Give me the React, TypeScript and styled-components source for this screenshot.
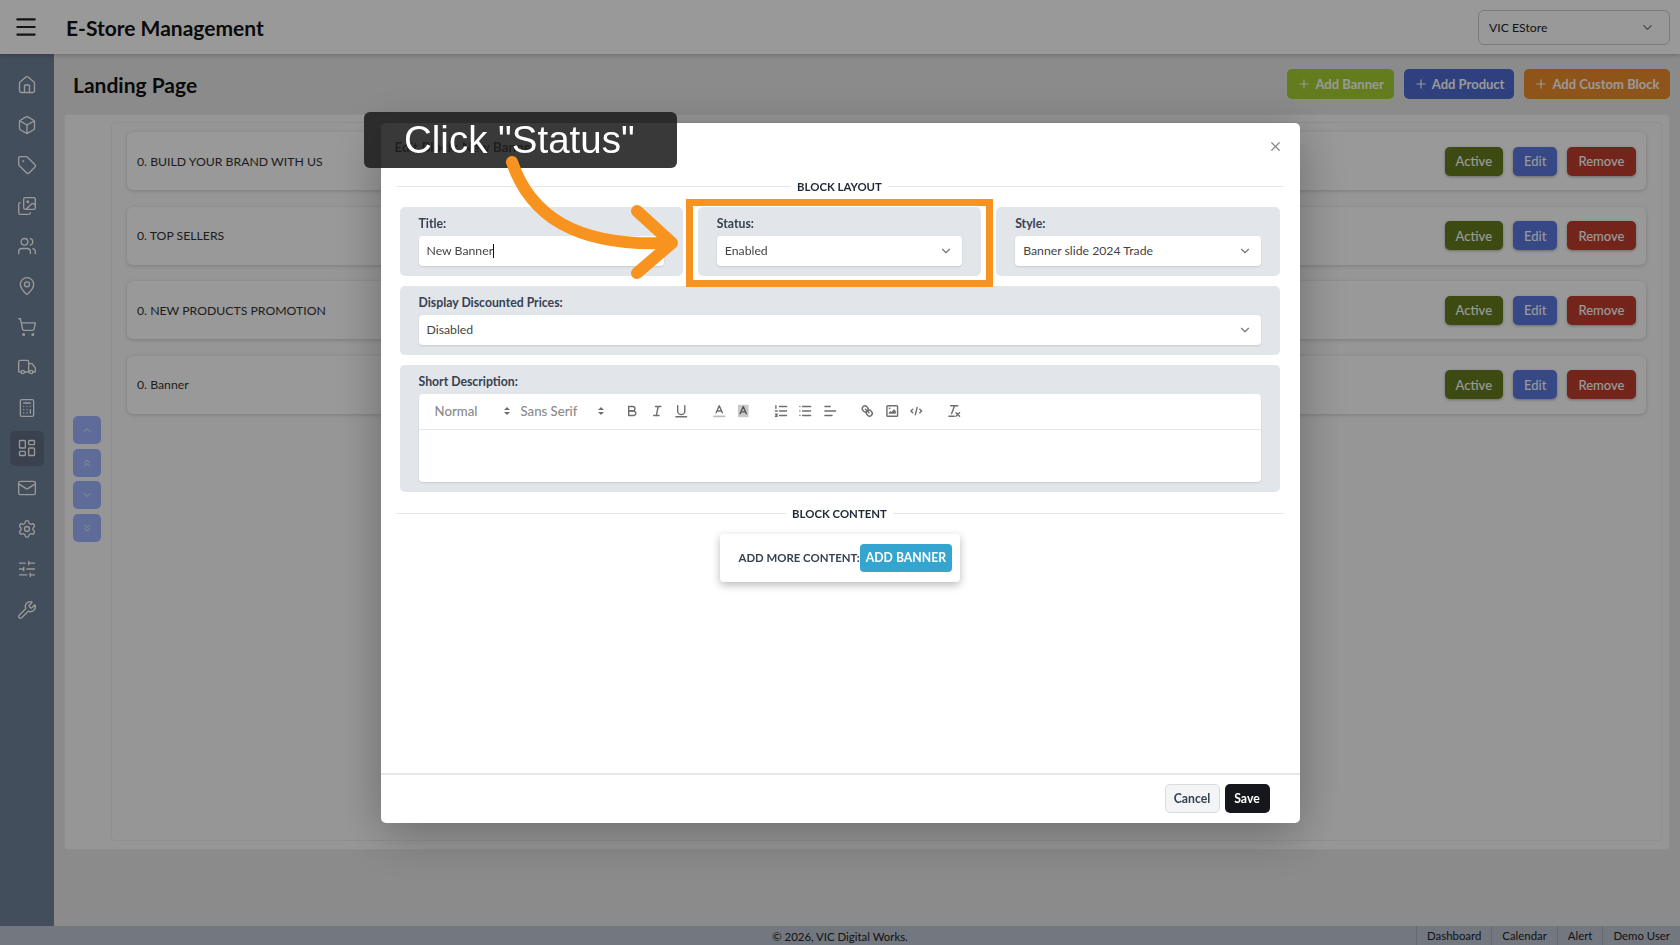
import styled, { createGlobalStyle } from 'styled-components';
import {
  Box,
  Calculator,
  ChevronDown,
  ChevronsDown,
  ChevronsUp,
  ChevronUp,
  House,
  Images,
  LayoutDashboard,
  Mail,
  MapPin,
  Menu,
  Plus,
  Settings,
  ShoppingCart,
  SlidersHorizontal,
  Tag,
  Truck,
  Users,
  Wrench,
  X,
} from 'lucide-react';

const GlobalStyle = createGlobalStyle`
  html, body {
    margin: 0;
    height: 100%;
    overflow: hidden;
    background: #e8e8e8;
    font-family: Lato, "Open Sans", sans-serif;
  }
  * { box-sizing: border-box; }
`;

const Shell = styled.div`
  height: 945px;
  display: flex;
  flex-direction: column;
`;

const TopBar = styled.header`
  height: 54px;
  flex: none;
  display: flex;
  align-items: center;
  padding: 0 10px 0 13px;
  background: #fff;
  box-shadow: 0 1px 5px rgba(0, 0, 0, 0.25);
  position: relative;
  color: #111;
`;

const AppTitle = styled.h1`
  margin: 0 auto 0 27px;
  font-size: 21px;
  font-weight: 700;
`;

const StoreSelect = styled.div`
  width: 192px;
  height: 35px;
  display: flex;
  align-items: center;
  justify-content: space-between;
  padding: 0 14px 0 10px;
  border: 1px solid #ccc;
  border-radius: 6px;
  font-size: 12.25px;
  color: #222;
`;

const Body = styled.div`
  flex: 1;
  display: flex;
  min-height: 0;
`;

const Sidebar = styled.nav`
  width: 53.5px;
  flex: none;
  display: flex;
  flex-direction: column;
  align-items: center;
  padding-top: 13px;
  background: #708299;
  color: #fff;
`;

const SideItem = styled.div<{ $active?: boolean }>`
  width: 34px;
  height: 35px;
  margin-bottom: 5.4px;
  display: flex;
  align-items: center;
  justify-content: center;
  border-radius: 5px;
  background: ${p => (p.$active ? '#616e85' : 'transparent')};
`;

const Main = styled.main`
  flex: 1;
  display: flex;
  flex-direction: column;
  padding: 0 10.5px;
  min-width: 0;
`;

const PageHead = styled.div`
  height: 60px;
  flex: none;
  display: flex;
  align-items: flex-start;
  justify-content: space-between;
  padding: 15px 0 0 9px;
`;

const PageTitle = styled.h2`
  margin: 3px 0 0;
  font-size: 21px;
  font-weight: 700;
  color: #111;
`;

const HeadActions = styled.div`
  display: flex;
  gap: 10px;
`;

const AddButton = styled.button<{ $bg: string }>`
  height: 30px;
  padding: 0 10px;
  display: flex;
  align-items: center;
  gap: 4px;
  border: 0;
  border-radius: 5px;
  background: ${p => p.$bg};
  color: #fff;
  font: 700 13px Lato, sans-serif;
`;

const Panel = styled.section`
  height: 736px;
  display: flex;
  background: #fbfbfb;
  border: 1px solid #eee;
  border-radius: 4px;
`;

const MoveColumn = styled.div`
  width: 46px;
  flex: none;
  display: flex;
  flex-direction: column;
  align-items: center;
  justify-content: center;
  gap: 4.5px;
  padding: 0 2px 6px 0;
`;

const MoveButton = styled.div`
  width: 28px;
  height: 28px;
  display: flex;
  align-items: center;
  justify-content: center;
  border-radius: 5px;
  background: #9eb4ff;
  color: #eef1ff;
`;

const BlockList = styled.div`
  flex: 1;
  margin: 7px 7px 8px 0;
  padding: 9px 15px;
  display: flex;
  flex-direction: column;
  gap: 16.5px;
  border: 1px solid #eee;
  border-radius: 4px;
`;

const BlockRow = styled.div`
  height: 58px;
  flex: none;
  display: flex;
  align-items: center;
  padding: 0 10px;
  background: #fff;
  border-radius: 6px;
  box-shadow: 0 1px 4px rgba(0, 0, 0, 0.18);
  font-size: 12.25px;
  color: #333;
`;

const RowName = styled.span`
  margin-right: auto;
`;

const RowButton = styled.button<{ $bg: string }>`
  height: 29px;
  margin-left: 10px;
  padding: 0 11px;
  border: 0;
  border-radius: 5px;
  background: ${p => p.$bg};
  color: #fff;
  font: 500 13px Lato, sans-serif;
  box-shadow: 0 1px 3px rgba(0, 0, 0, 0.3);
`;

const Footer = styled.footer`
  height: 19px;
  flex: none;
  position: relative;
  display: flex;
  justify-content: flex-end;
  align-items: center;
  background: #c0c6d5;
  font-size: 11.4px;
  color: #222;
`;

const Copyright = styled.span`
  position: absolute;
  left: 0;
  right: 0;
  top: 4px;
  text-align: center;
`;

const FooterLink = styled.span`
  height: 100%;
  display: flex;
  align-items: center;
  padding: 0 10px;
  border-left: 1px solid #a9afbe;
  &:first-of-type { border-left: 0; }
`;

const Backdrop = styled.div`
  position: fixed;
  inset: 0;
  display: flex;
  justify-content: center;
  padding-top: 122.5px;
  background: rgba(0, 0, 0, 0.4);
`;

const Modal = styled.div`
  width: 919px;
  height: 700px;
  display: flex;
  flex-direction: column;
  background: #fff;
  border-radius: 5px;
  box-shadow: 0 10px 50px rgba(0, 0, 0, 0.3);
`;

const ModalHead = styled.div`
  height: 48px;
  flex: none;
  display: flex;
  align-items: center;
  justify-content: space-between;
  padding: 0 17px 0 14px;
  font-size: 13.5px;
  font-weight: 700;
  color: #222;
`;

const ModalBody = styled.div`
  flex: 1;
  padding: 9px 20px 0 19px;
  display: flex;
  flex-direction: column;
  min-height: 0;
`;

const SectionRule = styled.div`
  display: flex;
  align-items: center;
  gap: 6px;
  margin: 0 -4px;
  font-size: 11.4px;
  font-weight: 700;
  color: #1f2937;
  &::before, &::after {
    content: '';
    flex: 1;
    height: 1px;
    background: #e5e7eb;
  }
`;

const FieldRow = styled.div`
  display: grid;
  grid-template-columns: repeat(3, 1fr);
  gap: 15px;
  margin-top: 14px;
`;

const FieldBlock = styled.div<{ $wide?: boolean }>`
  margin-top: ${p => (p.$wide ? '10px' : '0')};
  padding: 9px 19px 10px;
  background: #e2e5ea;
  border-radius: 5px;
`;

const FieldLabel = styled.div`
  margin-bottom: 4px;
  font-size: 12.25px;
  font-weight: 700;
  line-height: 16px;
  color: #374151;
`;

const FieldBox = styled.div`
  height: 30px;
  display: flex;
  align-items: center;
  justify-content: space-between;
  padding: 0 9px 0 8px;
  background: #fff;
  border-radius: 4px;
  box-shadow: 0 1px 2px rgba(0, 0, 0, 0.12);
  font-size: 12.25px;
  color: #444;
`;

const Caret = styled.span`
  width: 1px;
  height: 14px;
  background: #111;
  display: inline-block;
  vertical-align: -3px;
`;

const Editor = styled.div`
  height: 88px;
  background: #fff;
  border-radius: 4px;
  box-shadow: 0 1px 2px rgba(0, 0, 0, 0.12);
`;

const Toolbar = styled.div`
  height: 36px;
  display: flex;
  align-items: center;
  padding-left: 8px;
  border-bottom: 1px solid #e5e7eb;
`;

const Picker = styled.div<{ $w: number }>`
  width: ${p => p.$w}px;
  flex: none;
  display: flex;
  align-items: center;
  justify-content: space-between;
  padding: 0 2px 0 8px;
  font-size: 13.2px;
  font-weight: 500;
  color: #8a8a8a;
`;

const ToolGroup = styled.div`
  display: flex;
  margin-left: 13px;
`;

const ToolIcon = styled.svg`
  width: 24.5px;
  height: 16px;
  fill: none;
  stroke: #6e6e6e;
  stroke-width: 1.6;
  stroke-linecap: round;
  stroke-linejoin: round;
`;

const SecondRule = styled(SectionRule)`
  margin-top: 15px;
`;

const AddCard = styled.div`
  align-self: center;
  width: 240px;
  height: 48px;
  margin-top: 14px;
  display: flex;
  align-items: center;
  justify-content: space-between;
  padding: 0 19px;
  background: #fff;
  border-radius: 4px;
  box-shadow: 0 3px 8px rgba(0, 0, 0, 0.28);
  font-size: 11.4px;
  font-weight: 700;
  color: #374151;
  white-space: nowrap;
`;

const AddBannerButton = styled.button`
  width: 93px;
  height: 28px;
  border: 0;
  border-radius: 4px;
  background: #34a5ce;
  color: #fff;
  font: 700 12.25px Lato, sans-serif;
`;

const ModalFoot = styled.div`
  height: 50px;
  flex: none;
  display: flex;
  align-items: center;
  justify-content: flex-end;
  gap: 5px;
  padding-right: 30px;
  border-top: 2px solid #e5e7eb;
`;

const FootButton = styled.button<{ $dark?: boolean }>`
  height: 29px;
  width: ${p => (p.$dark ? 45 : 55)}px;
  padding: 0;
  border: ${p => (p.$dark ? '0' : '1px solid #d8dbe0')};
  border-radius: 5px;
  background: ${p => (p.$dark ? '#15171c' : '#f3f4f6')};
  color: ${p => (p.$dark ? '#fff' : '#374151')};
  font: 700 12.25px Lato, sans-serif;
`;

const Highlight = styled.div`
  position: fixed;
  left: 686px;
  top: 199px;
  width: 307px;
  height: 88px;
  border: 7px solid #f7931e;
`;

const Callout = styled.div`
  position: fixed;
  left: 364px;
  top: 112px;
  width: 313px;
  height: 56px;
  display: flex;
  align-items: center;
  padding-left: 40px;
  background: rgba(30, 30, 30, 0.88);
  border-radius: 6px;
  font: 38.5px "Liberation Sans", Arial, sans-serif;
  color: #fff;
`;

const ArrowDrawing = styled.svg`
  position: fixed;
  left: 0;
  top: 0;
  width: 1680px;
  height: 945px;
  pointer-events: none;
`;

const sideIcons = [
  House,
  Box,
  Tag,
  Images,
  Users,
  MapPin,
  ShoppingCart,
  Truck,
  Calculator,
  LayoutDashboard,
  Mail,
  Settings,
  SlidersHorizontal,
  Wrench,
];

const blocks = [
  '0. BUILD YOUR BRAND WITH US',
  '0. TOP SELLERS',
  '0. NEW PRODUCTS PROMOTION',
  '0. Banner',
];

const PickerArrows = () => (
  <svg width="8" height="12" viewBox="0 0 8 12">
    <polygon points="1,5 4,2 7,5" fill="#6e6e6e" />
    <polygon points="1,7 4,10 7,7" fill="#6e6e6e" />
  </svg>
);

const App = () => {
  return (
    <>
      <GlobalStyle />
      <Shell>
        <TopBar>
          <Menu size={26} strokeWidth={2} color="#222" />
          <AppTitle>E-Store Management</AppTitle>
          <StoreSelect>
            VIC EStore
            <ChevronDown size={15} color="#777" />
          </StoreSelect>
        </TopBar>
        <Body>
          <Sidebar>
            {sideIcons.map((Icon, i) => (
              <SideItem key={i} $active={i === 9}>
                <Icon size={20} strokeWidth={1.6} />
              </SideItem>
            ))}
          </Sidebar>
          <Main>
            <PageHead>
              <PageTitle>Landing Page</PageTitle>
              <HeadActions>
                <AddButton $bg="#a6d033">
                  <Plus size={14} /> Add Banner
                </AddButton>
                <AddButton $bg="#4d6cd0">
                  <Plus size={14} /> Add Product
                </AddButton>
                <AddButton $bg="#ee8c2c">
                  <Plus size={14} /> Add Custom Block
                </AddButton>
              </HeadActions>
            </PageHead>
            <Panel>
              <MoveColumn>
                <MoveButton><ChevronUp size={12} /></MoveButton>
                <MoveButton><ChevronsUp size={12} /></MoveButton>
                <MoveButton><ChevronDown size={12} /></MoveButton>
                <MoveButton><ChevronsDown size={12} /></MoveButton>
              </MoveColumn>
              <BlockList>
                {blocks.map(name => (
                  <BlockRow key={name}>
                    <RowName>{name}</RowName>
                    <RowButton $bg="#677d21">Active</RowButton>
                    <RowButton $bg="#5a78e0">Edit</RowButton>
                    <RowButton $bg="#c03f2f">Remove</RowButton>
                  </BlockRow>
                ))}
              </BlockList>
            </Panel>
          </Main>
        </Body>
        <Footer>
          <Copyright>© 2026, VIC Digital Works.</Copyright>
          <FooterLink>Dashboard</FooterLink>
          <FooterLink>Calendar</FooterLink>
          <FooterLink>Alert</FooterLink>
          <FooterLink>Demo User</FooterLink>
        </Footer>
      </Shell>

      <Backdrop>
        <Modal>
          <ModalHead>
            Edit Block: New Banner
            <X size={15} color="#888" />
          </ModalHead>
          <ModalBody>
            <SectionRule>BLOCK LAYOUT</SectionRule>
            <FieldRow>
              <FieldBlock>
                <FieldLabel>Title:</FieldLabel>
                <FieldBox>
                  <span>New Banner<Caret /></span>
                </FieldBox>
              </FieldBlock>
              <FieldBlock>
                <FieldLabel>Status:</FieldLabel>
                <FieldBox>
                  Enabled
                  <ChevronDown size={14} color="#777" />
                </FieldBox>
              </FieldBlock>
              <FieldBlock>
                <FieldLabel>Style:</FieldLabel>
                <FieldBox>
                  Banner slide 2024 Trade
                  <ChevronDown size={14} color="#777" />
                </FieldBox>
              </FieldBlock>
            </FieldRow>
            <FieldBlock $wide>
              <FieldLabel>Display Discounted Prices:</FieldLabel>
              <FieldBox>
                Disabled
                <ChevronDown size={14} color="#777" />
              </FieldBox>
            </FieldBlock>
            <FieldBlock $wide>
              <FieldLabel>Short Description:</FieldLabel>
              <Editor>
                <Toolbar>
                  <Picker $w={86}>Normal <PickerArrows /></Picker>
                  <Picker $w={94.5}>Sans Serif <PickerArrows /></Picker>
                  <ToolGroup>
                    <ToolIcon viewBox="0 0 18 18">
                      <path d="M5,4H9.5A2.5,2.5,0,0,1,12,6.5v0A2.5,2.5,0,0,1,9.5,9H5V4Z" />
                      <path d="M5,9h5.5A2.5,2.5,0,0,1,13,11.5v0A2.5,2.5,0,0,1,10.5,14H5V9Z" />
                    </ToolIcon>
                    <ToolIcon viewBox="0 0 18 18">
                      <path d="M7 4H13M5 14H11M8 14L10 4" />
                    </ToolIcon>
                    <ToolIcon viewBox="0 0 18 18">
                      <path d="M5,3V9a4,4,0,0,0,4,4h0a4,4,0,0,0,4-4V3M3 15.5H15" />
                    </ToolIcon>
                  </ToolGroup>
                  <ToolGroup>
                    <ToolIcon viewBox="0 0 18 18">
                      <path d="M5.5,11 9,3 12.5,11M11.6,9H6.4" />
                      <path d="M3 15H15" strokeWidth="2" stroke="#bdbdbd" />
                    </ToolIcon>
                    <ToolIcon viewBox="0 0 18 18">
                      <rect x="3" y="2" width="12" height="14" fill="#c9c9c9" stroke="none" />
                      <path d="M5.5,12 9,4 12.5,12M11.6,10H6.4" stroke="#555" />
                    </ToolIcon>
                  </ToolGroup>
                  <ToolGroup>
                    <ToolIcon viewBox="0 0 18 18">
                      <path d="M7 4H15M7 9H15M7 14H15M3 3V6M2.5 9H4.5M2.5 12.5H4.5L2.5 15H4.5" />
                    </ToolIcon>
                    <ToolIcon viewBox="0 0 18 18">
                      <path d="M6 4H15M6 9H15M6 14H15M3 4H3M3 9H3M3 14H3" />
                    </ToolIcon>
                    <ToolIcon viewBox="0 0 18 18">
                      <path d="M3 4H9M3 9H15M3 14H11" />
                    </ToolIcon>
                  </ToolGroup>
                  <ToolGroup>
                    <ToolIcon viewBox="0 0 18 18">
                      <path d="M7 7L11 11" />
                      <path d="M8.9,4.577a3.476,3.476,0,0,1,.36,4.679A3.476,3.476,0,0,1,4.577,8.9C3.185,7.5,2.035,6.4,4.217,4.217S7.5,3.185,8.9,4.577Z" />
                      <path d="M13.423,9.1a3.476,3.476,0,0,0-4.679-.36,3.476,3.476,0,0,0,.36,4.679c1.392,1.392,2.5,2.542,4.679.36S14.815,10.5,13.423,9.1Z" />
                    </ToolIcon>
                    <ToolIcon viewBox="0 0 18 18">
                      <rect x="3" y="3" width="12" height="12" rx="1" />
                      <circle cx="6" cy="6" r="1" fill="#6e6e6e" stroke="none" />
                      <polygon points="5,12 5,11 7,9 8,10 11,7 13,9 13,12" fill="#6e6e6e" stroke="none" />
                    </ToolIcon>
                    <ToolIcon viewBox="0 0 18 18">
                      <path d="M5 7L3 9L5 11M13 7L15 9L13 11M10 5L8 13" />
                    </ToolIcon>
                  </ToolGroup>
                  <ToolGroup>
                    <ToolIcon viewBox="0 0 18 18">
                      <path d="M5 3H13M6 12L9.35 3M3 15H9M11 11L15 15M15 11L11 15" />
                    </ToolIcon>
                  </ToolGroup>
                </Toolbar>
              </Editor>
            </FieldBlock>
            <SecondRule>BLOCK CONTENT</SecondRule>
            <AddCard>
              ADD MORE CONTENT:
              <AddBannerButton>ADD BANNER</AddBannerButton>
            </AddCard>
          </ModalBody>
          <ModalFoot>
            <FootButton>Cancel</FootButton>
            <FootButton $dark>Save</FootButton>
          </ModalFoot>
        </Modal>
      </Backdrop>

      <Highlight />
      <Callout>Click "Status"</Callout>
      <ArrowDrawing viewBox="0 0 1680 945" fill="none" stroke="#f7931e" strokeWidth="12" strokeLinecap="round" strokeLinejoin="round">
        <path d="M512 162C530 215 575 247 668 243" />
        <path d="M637 211L672 243L637 273" />
      </ArrowDrawing>
    </>
  );
};

export default App;
